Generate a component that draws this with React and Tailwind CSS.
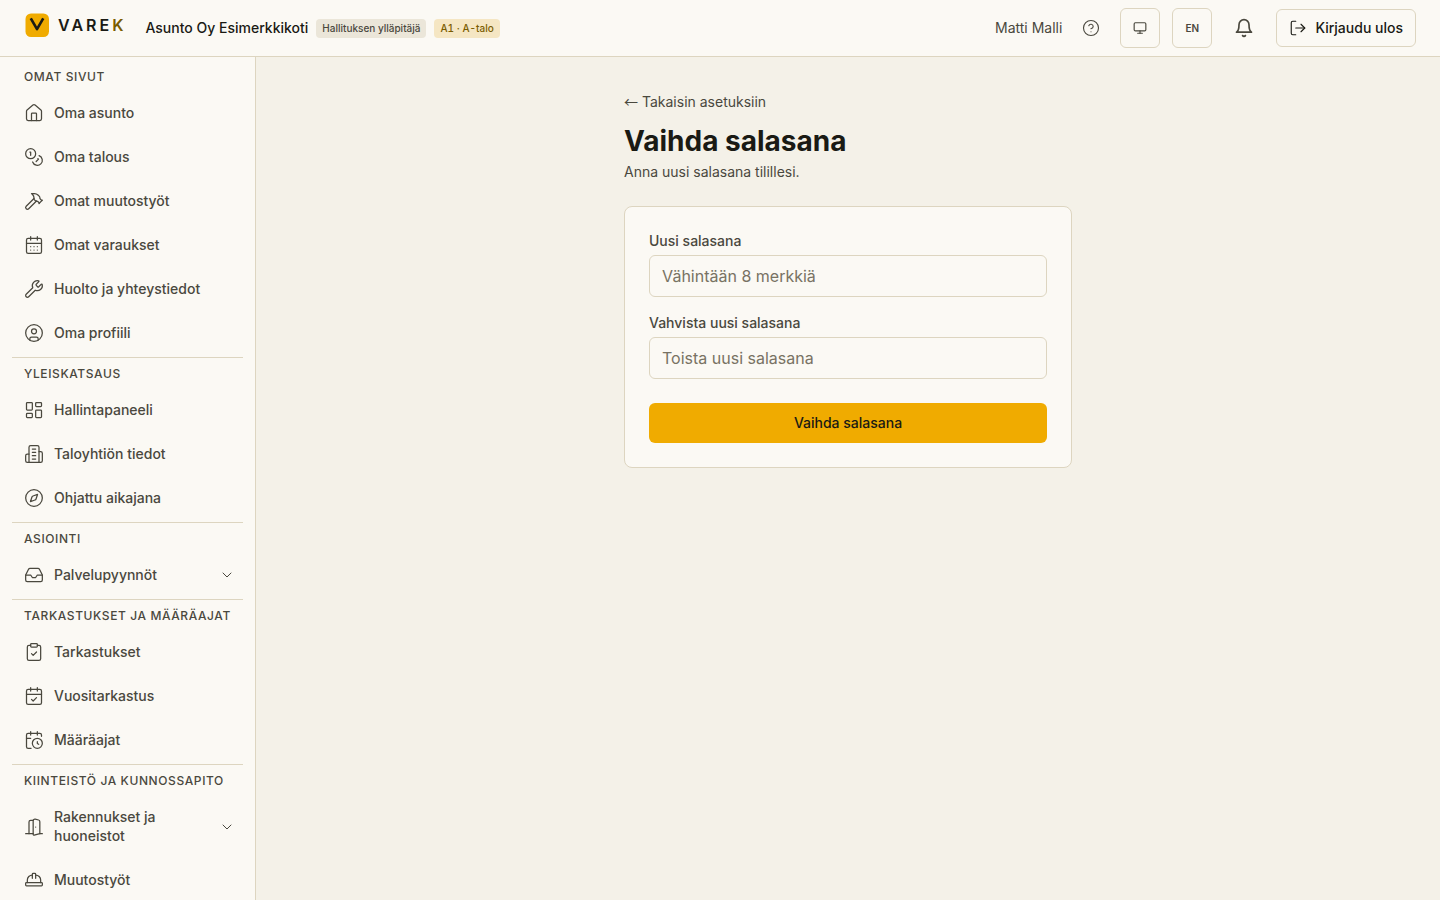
import {
    CalendarCheck, CalendarClock, CalendarDays, ChevronDown, CircleQuestionMark, CircleUser, ClipboardCheck,
    Coins, Compass, DoorOpen, Hammer, HardHat, House, Inbox, LayoutDashboard, LogOut, Monitor, Wrench,
} from 'lucide-react';

function BuildingIcon({ size, strokeWidth, className }) {
    return (
        <svg className={className} width={size} height={size} viewBox="0 0 24 24" fill="none" stroke="currentColor" strokeWidth={strokeWidth} strokeLinecap="round" strokeLinejoin="round" aria-hidden="true">
            <path d="M6 22V4a2 2 0 0 1 2-2h8a2 2 0 0 1 2 2v18Z" />
            <path d="M6 12H4a2 2 0 0 0-2 2v6a2 2 0 0 0 2 2h2" />
            <path d="M18 9h2a2 2 0 0 1 2 2v9a2 2 0 0 1-2 2h-2" />
            <path d="M10 6h4M10 10h4M10 14h4M10 18h4" />
        </svg>
    )
}

function BellIcon() {
    return (
        <svg width="20" height="20" viewBox="0 0 24 24" fill="none" stroke="currentColor" strokeWidth="2" strokeLinecap="round" strokeLinejoin="round" aria-hidden="true">
            <path d="M6 8a6 6 0 0 1 12 0c0 7 3 9 3 9H3s3-2 3-9" />
            <path d="M10.3 21a1.94 1.94 0 0 0 3.4 0" />
        </svg>
    )
}

const sections = [
    {
        title: 'Omat sivut',
        items: [
            { label: 'Oma asunto', icon: House },
            { label: 'Oma talous', icon: Coins },
            { label: 'Omat muutostyöt', icon: Hammer },
            { label: 'Omat varaukset', icon: CalendarDays },
            { label: 'Huolto ja yhteystiedot', icon: Wrench },
            { label: 'Oma profiili', icon: CircleUser },
        ],
    },
    {
        title: 'Yleiskatsaus',
        items: [
            { label: 'Hallintapaneeli', icon: LayoutDashboard },
            { label: 'Taloyhtiön tiedot', icon: BuildingIcon },
            { label: 'Ohjattu aikajana', icon: Compass },
        ],
    },
    {
        title: 'Asiointi',
        items: [
            { label: 'Palvelupyynnöt', icon: Inbox, expandable: true },
        ],
    },
    {
        title: 'Tarkastukset ja määräajat',
        items: [
            { label: 'Tarkastukset', icon: ClipboardCheck },
            { label: 'Vuositarkastus', icon: CalendarCheck },
            { label: 'Määräajat', icon: CalendarClock },
        ],
    },
    {
        title: 'Kiinteistö ja kunnossapito',
        items: [
            { label: 'Rakennukset ja huoneistot', icon: DoorOpen, expandable: true },
            { label: 'Muutostyöt', icon: HardHat },
        ],
    },
];

function Logo() {
    return (
        <a href="#" className="mb-1.5 flex items-center gap-2">
            <svg width="26" height="26" viewBox="0 0 26 26" fill="none" aria-hidden="true">
                <rect x="1.5" y="1.5" width="23.5" height="23.5" rx="5.5" fill="#f0ab00" />
                <path d="M7.4 7.5 13 17.2 18.6 7.5" stroke="#1a1a14" strokeWidth="2.6" strokeLinecap="square" strokeLinejoin="round" />
            </svg>
            <span className="text-base leading-6 font-semibold tracking-[3px] text-[#1a1a14]">
                VARE<span className="text-[#7a5c00]">K</span>
            </span>
        </a>
    )
}

function Header() {
    return (
        <header className="flex h-[57px] shrink-0 items-center justify-between border-b border-[#ddd5c0] bg-[#fbf9f4] px-6">
            <div className="flex items-center gap-[19px]">
                <Logo />
                <div className="flex items-center gap-2">
                    <span className="text-sm font-medium">Asunto Oy Esimerkkikoti</span>
                    <span className="rounded-sm bg-[#ebe6d9] px-1.5 py-0.5 text-[10px] leading-[15px] font-medium text-[#4a483e]">Hallituksen ylläpitäjä</span>
                    <span className="rounded-sm bg-[#f5e6c3] px-1.5 py-0.5 text-[10px] leading-[15px] font-medium text-[#7a5c00] tabular-nums">A1 · A-talo</span>
                </div>
            </div>
            <div className="flex items-center gap-3 text-[#4a483e]">
                <span className="text-sm">Matti Malli</span>
                <button type="button" aria-label="Ohje" className="p-2">
                    <CircleQuestionMark size={18} strokeWidth={1.5} />
                </button>
                <button type="button" aria-label="Teema" className="flex size-10 items-center justify-center rounded-md border border-[#ddd5c0]">
                    <Monitor size={14} strokeWidth={2} />
                </button>
                <button type="button" className="size-10 rounded-md border border-[#ddd5c0] text-[10px] font-semibold">EN</button>
                <button type="button" aria-label="Ilmoitukset" className="flex size-10 items-center justify-center">
                    <BellIcon />
                </button>
                <button type="button" className="flex items-center gap-2 rounded-md border border-[#ddd5c0] px-3 py-2 text-sm font-medium text-[#1a1a14]">
                    <LogOut size={18} strokeWidth={1.5} />
                    Kirjaudu ulos
                </button>
            </div>
        </header>
    )
}

function NavItem({ item }) {
    const Icon = item.icon;
    const content = (
        <>
            <Icon size={20} strokeWidth={1.5} className="shrink-0" />
            <span className="flex-1 pb-px">{item.label}</span>
            {item.expandable && <ChevronDown size={16} strokeWidth={1.5} className="shrink-0" />}
        </>
    );
    if (item.expandable) {
        return (
            <button type="button" aria-expanded="false" className="flex w-full items-center gap-2.5 py-3 pr-2 pl-3 text-left text-sm leading-[19px] font-medium">
                {content}
            </button>
        )
    }
    return (
        <a href="#" className="flex items-center gap-2.5 px-3 py-3 text-sm leading-[19px] font-medium">
            {content}
        </a>
    )
}

function Sidebar() {
    return (
        <nav className="w-64 shrink-0 overflow-hidden border-r border-[#ddd5c0] bg-[#fbf9f4] px-3 pt-1 text-[#4a483e]">
            {sections.map((section, index) => (
                <section key={section.title} className={index > 0 ? 'mt-0.5 border-t border-[#ddd5c0]' : ''}>
                    <h2 className="px-3 pt-2 pb-1.5 text-xs font-medium tracking-wider whitespace-nowrap uppercase">{section.title}</h2>
                    <ul>
                        {section.items.map(item => (
                            <li key={item.label}>
                                <NavItem item={item} />
                            </li>
                        ))}
                    </ul>
                </section>
            ))}
        </nav>
    )
}

function PasswordField({ id, label, placeholder }) {
    return (
        <div className="flex flex-col gap-1">
            <label htmlFor={id} className="text-sm font-medium text-[#4a483e]">{label}</label>
            <input id={id} type="password" placeholder={placeholder} autoComplete="new-password"
                className="w-full rounded-md border border-[#ddd5c0] bg-[#fbf9f4] px-3 py-2 text-base placeholder:text-[#787263]" />
        </div>
    )
}

export default function App() {
    return (
        <div className="flex h-screen flex-col bg-[#f4f1e8] font-['Inter',sans-serif] text-[#1a1a14]">
            <Header />
            <div className="flex min-h-0 flex-1">
                <Sidebar />
                <main className="flex-1 overflow-y-auto px-8 pt-[35px]">
                    <div className="mx-auto max-w-md">
                        <a href="#" className="block text-sm text-[#4a483e]">
                            <span className="font-['Noto_Sans_CJK_JP',sans-serif] leading-none">←</span> Takaisin asetuksiin
                        </a>
                        <h1 className="mt-3 text-[28px] leading-[34px] font-bold">Vaihda salasana</h1>
                        <p className="mt-1 text-sm text-[#4a483e]">Anna uusi salasana tilillesi.</p>
                        <form className="mt-6 rounded-lg border border-[#ddd5c0] bg-[#fbf9f4] p-6" onSubmit={ev => ev.preventDefault()}>
                            <div className="flex flex-col gap-4">
                                <PasswordField id="new-password" label="Uusi salasana" placeholder="Vähintään 8 merkkiä" />
                                <PasswordField id="confirm-password" label="Vahvista uusi salasana" placeholder="Toista uusi salasana" />
                            </div>
                            <button type="submit" className="mt-6 w-full rounded-md bg-[#f0ab00] py-2.5 text-sm font-medium">
                                Vaihda salasana
                            </button>
                        </form>
                    </div>
                </main>
            </div>
        </div>
    )
}
